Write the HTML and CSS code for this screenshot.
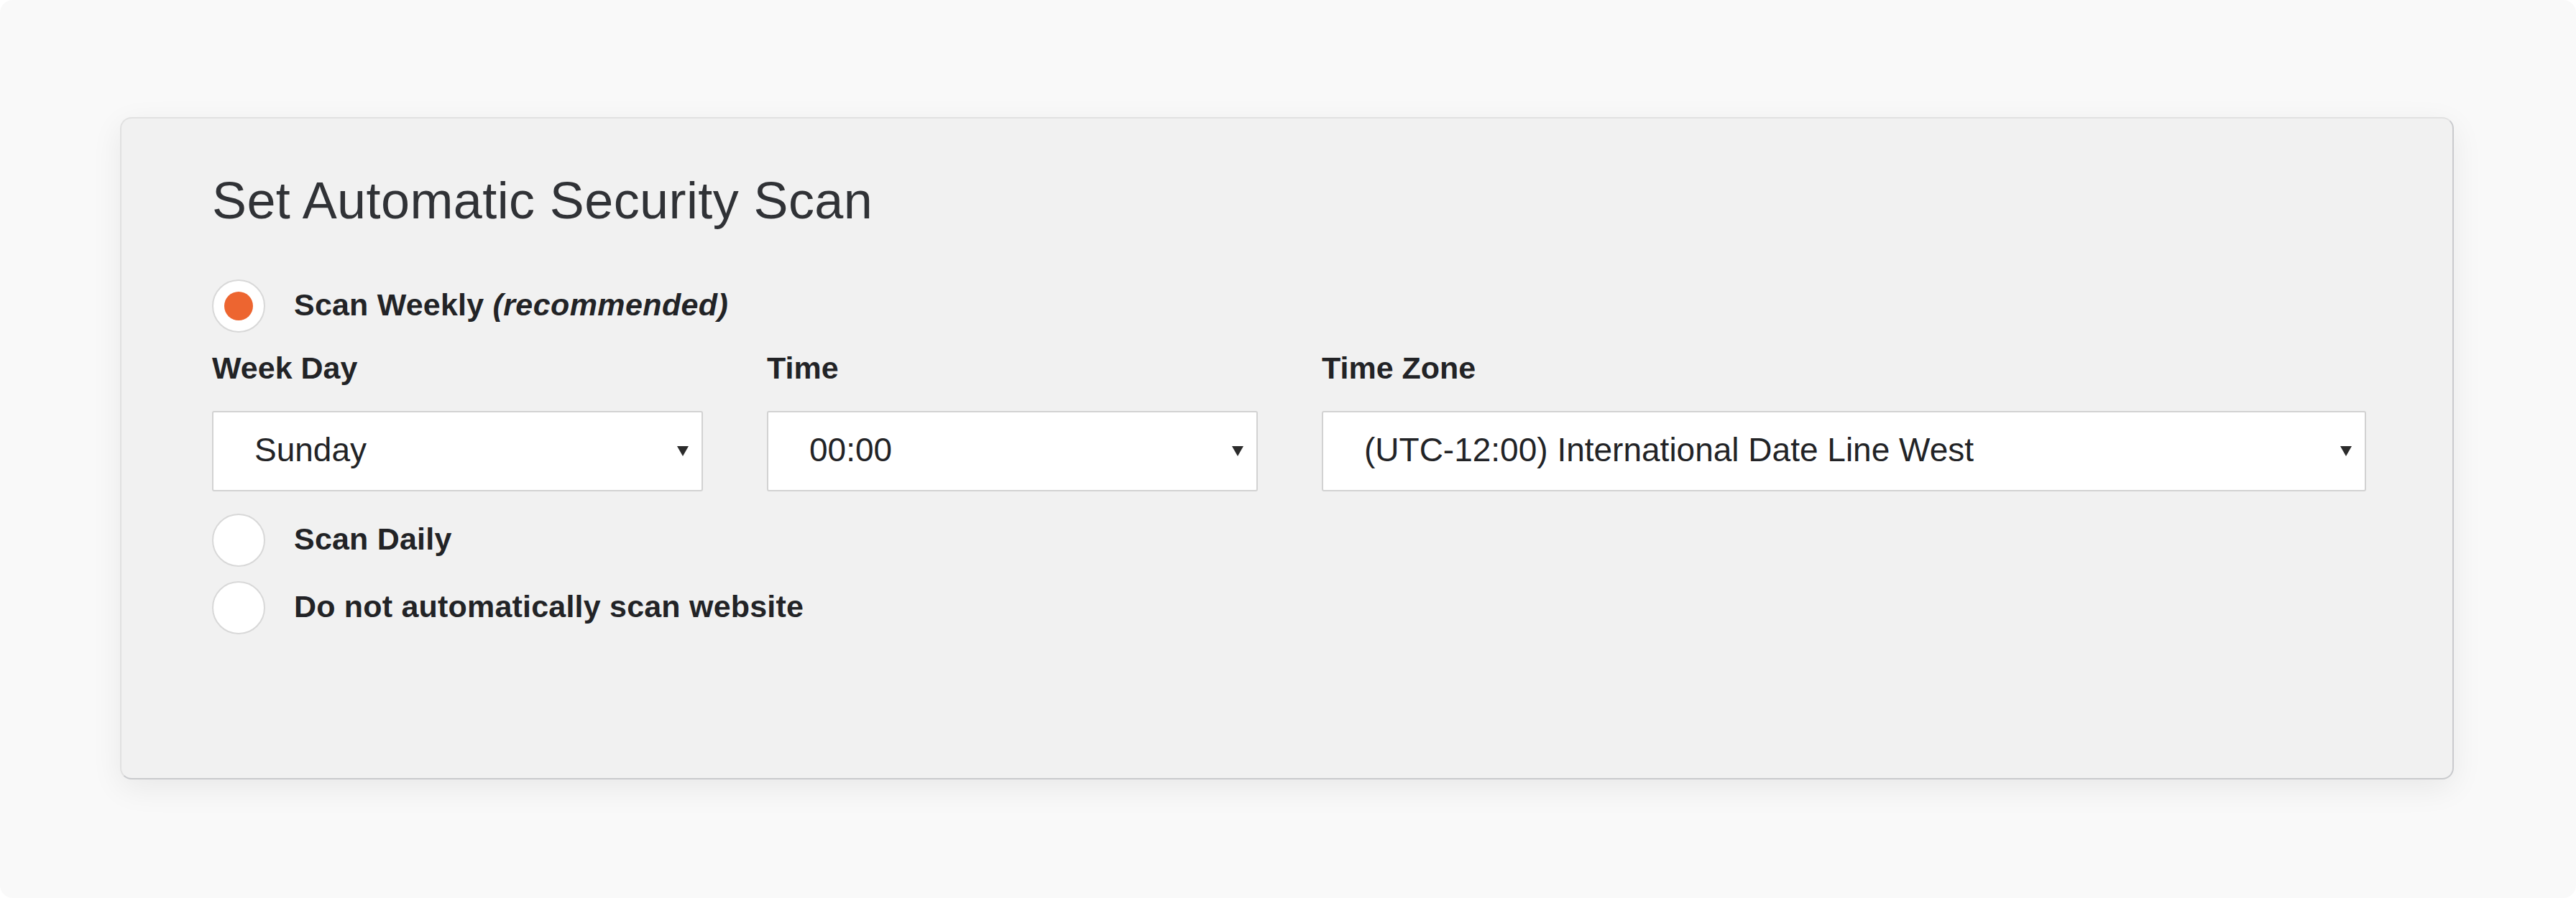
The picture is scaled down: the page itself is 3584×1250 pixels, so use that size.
FILE: index.html
```html
<!DOCTYPE html>
<html lang="en">
<head>
<meta charset="utf-8">
<title>Set Automatic Security Scan</title>
<link rel="stylesheet" href="styles.css">
</head>
<body>
<div class="page">
  <section class="card">
    <h1 class="title">Set Automatic Security Scan</h1>

    <div class="radio-row first">
      <span class="radio checked"><span class="dot"></span></span>
      <span class="radio-label">Scan Weekly <em>(recommended)</em></span>
    </div>

    <div class="fields">
      <div class="field">
        <div class="field-label">Week Day</div>
        <div class="select">
          <span class="select-value">Sunday</span>
          <svg class="caret" viewBox="0 0 16 14" width="16" height="14"><polygon points="0,0 16,0 8,14" fill="#2b2b2b"/></svg>
        </div>
      </div>
      <div class="field">
        <div class="field-label">Time</div>
        <div class="select">
          <span class="select-value">00:00</span>
          <svg class="caret" viewBox="0 0 16 14" width="16" height="14"><polygon points="0,0 16,0 8,14" fill="#2b2b2b"/></svg>
        </div>
      </div>
      <div class="field">
        <div class="field-label">Time Zone</div>
        <div class="select">
          <span class="select-value">(UTC-12:00) International Date Line West</span>
          <svg class="caret" viewBox="0 0 16 14" width="16" height="14"><polygon points="0,0 16,0 8,14" fill="#2b2b2b"/></svg>
        </div>
      </div>
    </div>

    <div class="radio-row second">
      <span class="radio"></span>
      <span class="radio-label">Scan Daily</span>
    </div>
    <div class="radio-row third">
      <span class="radio"></span>
      <span class="radio-label">Do not automatically scan website</span>
    </div>
  </section>
</div>
</body>
</html>
```

FILE: styles.css
```css
* {
  box-sizing: border-box;
}

html, body {
  margin: 0;
  padding: 0;
  background: #ffffff;
}

body {
  font-family: "Liberation Sans", Arial, sans-serif;
  color: #222326;
}

.page {
  width: 3584px;
  height: 1250px;
  background: #f9f9f9;
  border-radius: 18px;
  padding-top: 163px;
  padding-left: 167px;
  overflow: hidden;
}

.card {
  width: 3247px;
  height: 922px;
  background: #f1f1f1;
  border: 2px solid #e1e1e1;
  border-right-color: #c9cacd;
  border-bottom-color: #c9cacd;
  border-radius: 16px;
  box-shadow: 0 12px 44px rgba(0, 0, 0, 0.07);
  padding: 78px 120px 0 126px;
}

.title {
  margin: 0;
  font-size: 72px;
  line-height: 72px;
  font-weight: 400;
  color: #303236;
  letter-spacing: 0.4px;
}

.radio-row {
  display: flex;
  align-items: center;
  height: 74px;
}

.radio-row.first {
  margin-top: 74px;
}

.radio-row.second {
  margin-top: 31px;
}

.radio-row.third {
  margin-top: 20px;
}

.radio {
  width: 74px;
  height: 74px;
  flex: 0 0 74px;
  border-radius: 50%;
  background: #ffffff;
  border: 2px solid #d8d8d8;
  display: flex;
  align-items: center;
  justify-content: center;
}

.dot {
  width: 40px;
  height: 40px;
  border-radius: 50%;
  background: #ed6530;
}

.radio-label {
  margin-left: 40px;
  padding-bottom: 4px;
  font-size: 43px;
  line-height: 43px;
  font-weight: 700;
  color: #222326;
  letter-spacing: 0.2px;
}

.radio-label em {
  font-style: italic;
  letter-spacing: 0.4px;
}

.fields {
  display: grid;
  grid-template-columns: 683px 683px 1453px;
  column-gap: 89px;
  margin-top: 28px;
}

.field-label {
  font-size: 43px;
  line-height: 43px;
  font-weight: 700;
  color: #222326;
}

.select {
  margin-top: 38px;
  height: 112px;
  background: #ffffff;
  border: 2px solid #d2d2d2;
  border-radius: 3px;
  display: flex;
  align-items: center;
  justify-content: space-between;
  padding: 0 18px 0 57px;
}

.select-value {
  font-size: 46px;
  line-height: 46px;
  padding-bottom: 5px;
  color: #222326;
}

.caret {
  display: block;
  flex: 0 0 16px;
}
```
